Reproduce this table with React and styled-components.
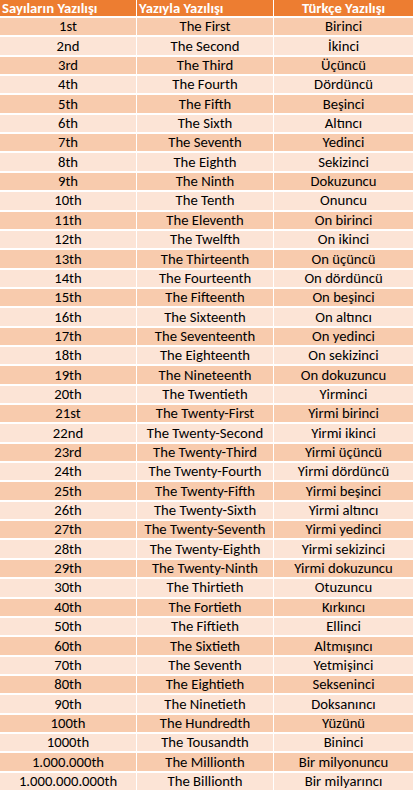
import React from 'react';
import styled, { createGlobalStyle } from 'styled-components';

const GlobalStyle = createGlobalStyle`
  html, body {
    margin: 0;
    padding: 0;
    background: #ffffff;
  }
`;

const rows = [
  ['1st', 'The First', 'Birinci'],
  ['2nd', 'The Second', 'İkinci'],
  ['3rd', 'The Third', 'Üçüncü'],
  ['4th', 'The Fourth', 'Dördüncü'],
  ['5th', 'The Fifth', 'Beşinci'],
  ['6th', 'The Sixth', 'Altıncı'],
  ['7th', 'The Seventh', 'Yedinci'],
  ['8th', 'The Eighth', 'Sekizinci'],
  ['9th', 'The Ninth', 'Dokuzuncu'],
  ['10th', 'The Tenth', 'Onuncu'],
  ['11th', 'The Eleventh', 'On birinci'],
  ['12th', 'The Twelfth', 'On ikinci'],
  ['13th', 'The Thirteenth', 'On üçüncü'],
  ['14th', 'The Fourteenth', 'On dördüncü'],
  ['15th', 'The Fifteenth', 'On beşinci'],
  ['16th', 'The Sixteenth', 'On altıncı'],
  ['17th', 'The Seventeenth', 'On yedinci'],
  ['18th', 'The Eighteenth', 'On sekizinci'],
  ['19th', 'The Nineteenth', 'On dokuzuncu'],
  ['20th', 'The Twentieth', 'Yirminci'],
  ['21st', 'The Twenty-First', 'Yirmi birinci'],
  ['22nd', 'The Twenty-Second', 'Yirmi ikinci'],
  ['23rd', 'The Twenty-Third', 'Yirmi üçüncü'],
  ['24th', 'The Twenty-Fourth', 'Yirmi dördüncü'],
  ['25th', 'The Twenty-Fifth', 'Yirmi beşinci'],
  ['26th', 'The Twenty-Sixth', 'Yirmi altıncı'],
  ['27th', 'The Twenty-Seventh', 'Yirmi yedinci'],
  ['28th', 'The Twenty-Eighth', 'Yirmi sekizinci'],
  ['29th', 'The Twenty-Ninth', 'Yirmi dokuzuncu'],
  ['30th', 'The Thirtieth', 'Otuzuncu'],
  ['40th', 'The Fortieth', 'Kırkıncı'],
  ['50th', 'The Fiftieth', 'Ellinci'],
  ['60th', 'The Sixtieth', 'Altmışıncı'],
  ['70th', 'The Seventh', 'Yetmişinci'],
  ['80th', 'The Eightieth', 'Sekseninci'],
  ['90th', 'The Ninetieth', 'Doksanıncı'],
  ['100th', 'The Hundredth', 'Yüzünü'],
  ['1000th', 'The Tousandth', 'Bininci'],
  ['1.000.000th', 'The Millionth', 'Bir milyonuncu'],
  ['1.000.000.000th', 'The Billionth', 'Bir milyarıncı'],
];

const Sheet = styled.div`
  width: 413px;
  height: 790px;
  display: grid;
  grid-template-columns: 136px 136px 139px;
  grid-template-rows: 16px repeat(40, 1fr);
  column-gap: 1px;
  row-gap: 2px;
  font-family: Carlito, Lato, 'Liberation Sans', sans-serif;
  font-size: 14.7px;
`;

const HeadCell = styled.div`
  background: #ed7d31;
  color: #ffffff;
  font-weight: bold;
  display: flex;
  align-items: center;
  justify-content: ${p => (p.center ? 'center' : 'flex-start')};
  padding-left: ${p => (p.center ? '0' : '2px')};
  white-space: nowrap;
  overflow: hidden;
  line-height: 1;
`;

const Cell = styled.div`
  background: ${p => (p.dark ? '#f8cbad' : '#fce4d6')};
  color: #000000;
  display: flex;
  align-items: center;
  justify-content: center;
  white-space: nowrap;
  line-height: 1;
`;

export default function App() {
  return (
    <>
      <GlobalStyle />
      <Sheet>
        <HeadCell>Sayıların Yazılışı</HeadCell>
        <HeadCell>Yazıyla Yazılışı</HeadCell>
        <HeadCell center>Türkçe Yazılışı</HeadCell>
        {rows.map((r, i) =>
          r.map((text, j) => (
            <Cell key={i + '-' + j} dark={i % 2 === 0}>
              {text}
            </Cell>
          ))
        )}
      </Sheet>
    </>
  );
}
